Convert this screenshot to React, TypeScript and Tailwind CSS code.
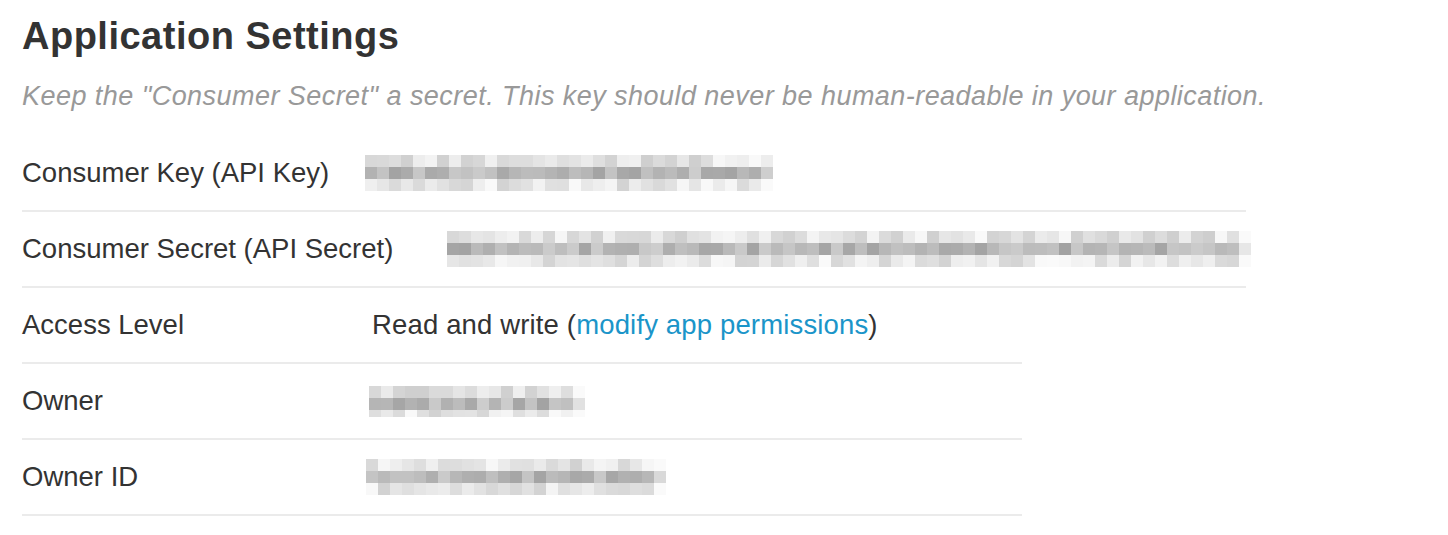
import React from "react";

function makeRand(seed: number) {
  let s = seed >>> 0;
  return () => {
    s = (s * 1664525 + 1013904223) >>> 0;
    return s / 4294967296;
  };
}

type PixProps = { cols: number; seed: number; heights: number[]; ranges: [number, number][] };

function Pix({ cols, seed, heights, ranges }: PixProps) {
  const rand = makeRand(seed);
  return (
    <div className="flex flex-col">
      {heights.map((h, r) => (
        <div key={r} className="flex">
          {Array.from({ length: cols }).map((_, c) => {
            const [lo, hi] = ranges[r];
            let v = Math.round(lo + rand() * (hi - lo));
            if (c === cols - 1) v = Math.min(250, v + 30);
            return (
              <div
                key={c}
                className="w-[12px] shrink-0"
                style={{ height: h, backgroundColor: `rgb(${v},${v},${v})` }}
              />
            );
          })}
        </div>
      ))}
    </div>
  );
}

const R3: [number, number][] = [
  [205, 250],
  [162, 205],
  [210, 250],
];

export default function App() {
  return (
    <div
      className="min-h-[535px] bg-white px-[22px] text-[#333]"
      style={{ fontFamily: '"Liberation Sans", Arial, sans-serif' }}
    >
      <h1 className="pt-[14px] text-[38px] font-bold leading-[44px] tracking-[0.5px] text-[#333]">
        Application Settings
      </h1>
      <p className="mt-[20px] text-[27px] italic leading-[36px] tracking-[0.45px] text-[#999]">
        Keep the "Consumer Secret" a secret. This key should never be human-readable in your application.
      </p>

      <div className="mt-[22px] flex flex-col text-[27.5px]">
        <div className="flex h-[76px] w-[1224px] items-center border-b-2 border-[#ebebeb]">
          <div className="w-[343px] shrink-0">Consumer Key (API Key)</div>
          <Pix cols={34} seed={11} heights={[12, 12, 12]} ranges={R3} />
        </div>
        <div className="flex h-[76px] w-[1224px] items-center border-b-2 border-[#ebebeb]">
          <div className="w-[425px] shrink-0">Consumer Secret (API Secret)</div>
          <Pix cols={67} seed={23} heights={[12, 12, 12]} ranges={R3} />
        </div>
        <div className="flex h-[76px] w-[1000px] items-center border-b-2 border-[#ebebeb]">
          <div className="w-[350px] shrink-0">Access Level</div>
          <div className="tracking-[0.15px]">
            Read and write (<span className="text-[#1b95c9]">modify app permissions</span>)
          </div>
        </div>
        <div className="flex h-[76px] w-[1000px] items-center border-b-2 border-[#ebebeb]">
          <div className="w-[347px] shrink-0">Owner</div>
          <Pix cols={18} seed={37} heights={[12, 12, 7]} ranges={R3} />
        </div>
        <div className="flex h-[76px] w-[1000px] items-center border-b-2 border-[#ebebeb]">
          <div className="w-[344px] shrink-0">Owner ID</div>
          <Pix cols={25} seed={51} heights={[12, 12, 12]} ranges={R3} />
        </div>
      </div>
    </div>
  );
}
